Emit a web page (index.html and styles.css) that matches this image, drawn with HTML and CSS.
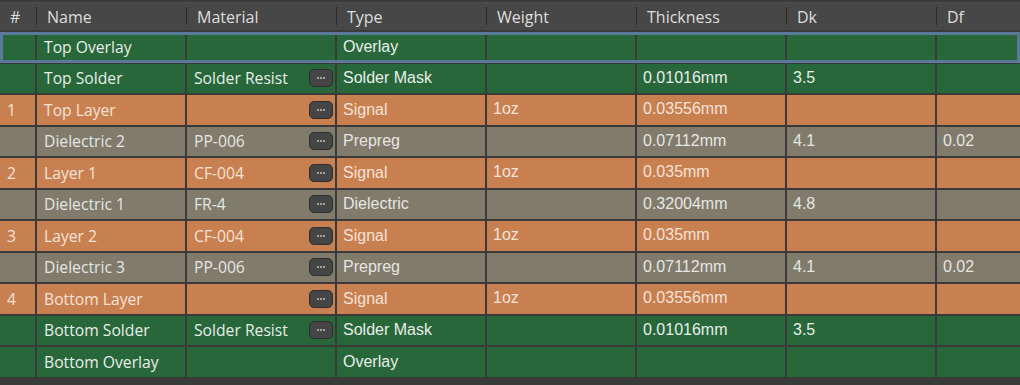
FILE: index.html
```html
<!DOCTYPE html>
<html lang="en">
<head>
<meta charset="utf-8">
<title>Layer Stack</title>
<link rel="stylesheet" href="styles.css">
</head>
<body>
<div class="stack">
  <div class="head">
    <div class="hcell first">#</div>
    <div class="hcell">Name</div>
    <div class="hcell">Material</div>
    <div class="hcell">Type</div>
    <div class="hcell">Weight</div>
    <div class="hcell">Thickness</div>
    <div class="hcell">Dk</div>
    <div class="hcell">Df</div>
  </div>

  <div class="rows">
    <div class="row mask selected">
      <div class="cell ui"></div>
      <div class="cell ui">Top Overlay</div>
      <div class="cell ui"></div>
      <div class="cell type">Overlay</div>
      <div class="cell num"></div>
      <div class="cell num"></div>
      <div class="cell num"></div>
      <div class="cell num"></div>
    </div>

    <div class="row mask">
      <div class="cell ui"></div>
      <div class="cell ui">Top Solder</div>
      <div class="cell ui mat"><span>Solder Resist</span><button class="more" type="button"><i></i><i></i><i></i></button></div>
      <div class="cell type">Solder Mask</div>
      <div class="cell num"></div>
      <div class="cell num">0.01016mm</div>
      <div class="cell num">3.5</div>
      <div class="cell num"></div>
    </div>

    <div class="row copper">
      <div class="cell ui">1</div>
      <div class="cell ui">Top Layer</div>
      <div class="cell ui mat"><span></span><button class="more" type="button"><i></i><i></i><i></i></button></div>
      <div class="cell type">Signal</div>
      <div class="cell num">1oz</div>
      <div class="cell num">0.03556mm</div>
      <div class="cell num"></div>
      <div class="cell num"></div>
    </div>

    <div class="row core">
      <div class="cell ui"></div>
      <div class="cell ui">Dielectric 2</div>
      <div class="cell ui mat"><span>PP-006</span><button class="more" type="button"><i></i><i></i><i></i></button></div>
      <div class="cell type">Prepreg</div>
      <div class="cell num"></div>
      <div class="cell num">0.07112mm</div>
      <div class="cell num">4.1</div>
      <div class="cell num">0.02</div>
    </div>

    <div class="row copper">
      <div class="cell ui">2</div>
      <div class="cell ui">Layer 1</div>
      <div class="cell ui mat"><span>CF-004</span><button class="more" type="button"><i></i><i></i><i></i></button></div>
      <div class="cell type">Signal</div>
      <div class="cell num">1oz</div>
      <div class="cell num">0.035mm</div>
      <div class="cell num"></div>
      <div class="cell num"></div>
    </div>

    <div class="row core">
      <div class="cell ui"></div>
      <div class="cell ui">Dielectric 1</div>
      <div class="cell ui mat"><span>FR-4</span><button class="more" type="button"><i></i><i></i><i></i></button></div>
      <div class="cell type">Dielectric</div>
      <div class="cell num"></div>
      <div class="cell num">0.32004mm</div>
      <div class="cell num">4.8</div>
      <div class="cell num"></div>
    </div>

    <div class="row copper">
      <div class="cell ui">3</div>
      <div class="cell ui">Layer 2</div>
      <div class="cell ui mat"><span>CF-004</span><button class="more" type="button"><i></i><i></i><i></i></button></div>
      <div class="cell type">Signal</div>
      <div class="cell num">1oz</div>
      <div class="cell num">0.035mm</div>
      <div class="cell num"></div>
      <div class="cell num"></div>
    </div>

    <div class="row core">
      <div class="cell ui"></div>
      <div class="cell ui">Dielectric 3</div>
      <div class="cell ui mat"><span>PP-006</span><button class="more" type="button"><i></i><i></i><i></i></button></div>
      <div class="cell type">Prepreg</div>
      <div class="cell num"></div>
      <div class="cell num">0.07112mm</div>
      <div class="cell num">4.1</div>
      <div class="cell num">0.02</div>
    </div>

    <div class="row copper">
      <div class="cell ui">4</div>
      <div class="cell ui">Bottom Layer</div>
      <div class="cell ui mat"><span></span><button class="more" type="button"><i></i><i></i><i></i></button></div>
      <div class="cell type">Signal</div>
      <div class="cell num">1oz</div>
      <div class="cell num">0.03556mm</div>
      <div class="cell num"></div>
      <div class="cell num"></div>
    </div>

    <div class="row mask">
      <div class="cell ui"></div>
      <div class="cell ui">Bottom Solder</div>
      <div class="cell ui mat"><span>Solder Resist</span><button class="more" type="button"><i></i><i></i><i></i></button></div>
      <div class="cell type">Solder Mask</div>
      <div class="cell num"></div>
      <div class="cell num">0.01016mm</div>
      <div class="cell num">3.5</div>
      <div class="cell num"></div>
    </div>

    <div class="row mask">
      <div class="cell ui"></div>
      <div class="cell ui">Bottom Overlay</div>
      <div class="cell ui"></div>
      <div class="cell type">Overlay</div>
      <div class="cell num"></div>
      <div class="cell num"></div>
      <div class="cell num"></div>
      <div class="cell num"></div>
    </div>
  </div>
</div>
</body>
</html>
```

FILE: styles.css
```css
html, body {
  margin: 0;
  padding: 0;
  background: #3a3a3a;
}

body {
  width: 1020px;
  height: 385px;
  overflow: hidden;
}

.stack {
  display: flex;
  flex-direction: column;
  padding-top: 2px;
  gap: 2px;
}

/* column header */
.head {
  display: grid;
  grid-template-columns: 36px repeat(6, 150px) 1fr;
  height: 28px;
  background: #474747;
  border-top: 1px solid #4c4c4c;
  box-sizing: border-box;
}

.hcell {
  display: flex;
  align-items: center;
  padding-left: 11px;
  font-family: "Open Sans", "Noto Sans", sans-serif;
  font-size: 16px;
  color: #dedede;
  background: linear-gradient(#2a2a2a, #2a2a2a) left 4px / 1px 18px no-repeat;
}

.hcell.first {
  padding-left: 10px;
  background: none;
}

/* layer rows */
.rows {
  display: flex;
  flex-direction: column;
  gap: 2px;
}

.row {
  position: relative;
  display: grid;
  grid-template-columns: 35px repeat(6, 148px) 1fr;
  column-gap: 2px;
  height: 29.5px;
}

.row.mask { --bg: #27673a; --fg: #e9eee9; }
.row.copper { --bg: #c98050; --fg: #f4e2d8; }
.row.core { --bg: #807b6b; --fg: #e6e6e4; }

/* current row highlight frame, drawn over the cells */
.row.selected::after {
  content: "";
  position: absolute;
  inset: 0 0 -1px 0;
  border: 3px solid #5b7a9b;
  pointer-events: none;
}

.cell {
  display: flex;
  align-items: center;
  background: var(--bg);
  color: var(--fg);
  padding-left: 7px;
  white-space: nowrap;
  overflow: hidden;
}

.cell.ui {
  font-family: "Open Sans", "Noto Sans", sans-serif;
  font-size: 15.7px;
}

.cell.type {
  font-family: "Liberation Sans", Arial, sans-serif;
  font-size: 16px;
  padding-left: 6px;
}

.cell.num {
  font-family: "Liberation Sans", Arial, sans-serif;
  font-size: 16px;
  padding-left: 6px;
  padding-bottom: 1px;
}

.cell.mat {
  justify-content: space-between;
  padding-right: 2px;
}

/* material picker button */
.more {
  display: flex;
  align-items: center;
  justify-content: center;
  gap: 1px;
  width: 24px;
  height: 18px;
  padding: 0;
  margin: 0;
  border: 1px solid #2e2e2e;
  border-radius: 5px;
  background: #454545;
  cursor: pointer;
}

.more i {
  display: block;
  width: 2px;
  height: 2px;
  background: #a4a4a4;
}
```
